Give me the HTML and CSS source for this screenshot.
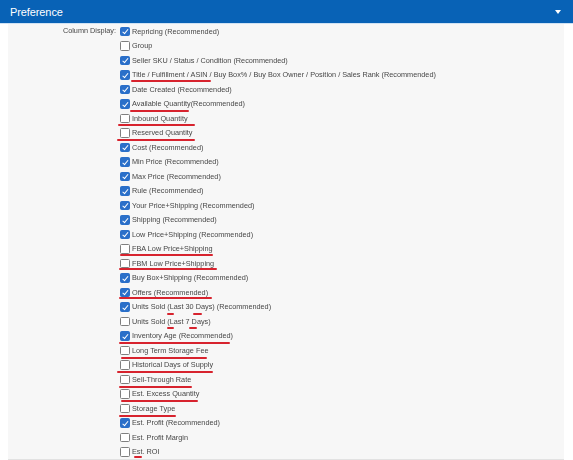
FILE: index.html
```html
<!DOCTYPE html>
<html>
<head>
<meta charset="utf-8">
<link rel="stylesheet" href="styles.css">
</head>
<body>
<div class="header">
  <span class="title">Preference</span>
  <span class="caret"></span>
</div>
<div class="panel">
  <div class="label">Column Display:</div>
  <div class="list">
    <div class="row"><span class="cb on"></span><span class="txt">Repricing (Recommended)</span></div>
    <div class="row"><span class="cb"></span><span class="txt">Group</span></div>
    <div class="row"><span class="cb on"></span><span class="txt">Seller SKU / Status / Condition (Recommended)</span></div>
    <div class="row"><span class="cb on"></span><span class="txt">Title / Fulfillment / ASIN / Buy Box% / Buy Box Owner / Position / Sales Rank (Recommended)</span><span class="mark" style="left:11px;width:80px;top:12px"></span></div>
    <div class="row"><span class="cb on"></span><span class="txt">Date Created (Recommended)</span></div>
    <div class="row"><span class="cb on"></span><span class="txt">Available Quantity(Recommended)</span><span class="mark" style="left:10px;width:59px;top:13px"></span></div>
    <div class="row"><span class="cb"></span><span class="txt">Inbound Quantity</span><span class="mark" style="left:-2px;width:77px;top:13px"></span></div>
    <div class="row"><span class="cb"></span><span class="txt">Reserved Quantity</span><span class="mark" style="left:-3px;width:78px;top:13px"></span></div>
    <div class="row"><span class="cb on"></span><span class="txt">Cost (Recommended)</span></div>
    <div class="row"><span class="cb on"></span><span class="txt">Min Price (Recommended)</span></div>
    <div class="row"><span class="cb on"></span><span class="txt">Max Price (Recommended)</span></div>
    <div class="row"><span class="cb on"></span><span class="txt">Rule (Recommended)</span></div>
    <div class="row"><span class="cb on"></span><span class="txt">Your Price+Shipping (Recommended)</span></div>
    <div class="row"><span class="cb on"></span><span class="txt">Shipping (Recommended)</span></div>
    <div class="row"><span class="cb on"></span><span class="txt">Low Price+Shipping (Recommended)</span></div>
    <div class="row"><span class="cb"></span><span class="txt">FBA Low Price+Shipping</span><span class="mark" style="left:0px;width:93px;top:12px"></span></div>
    <div class="row"><span class="cb"></span><span class="txt">FBM Low Price+Shipping</span><span class="mark" style="left:-1px;width:98px;top:12px"></span></div>
    <div class="row"><span class="cb on"></span><span class="txt">Buy Box+Shipping (Recommended)</span></div>
    <div class="row"><span class="cb on"></span><span class="txt">Offers (Recommended)</span><span class="mark" style="left:-1px;width:93px;top:12px"></span></div>
    <div class="row"><span class="cb on"></span><span class="txt">Units Sold (Last 30 Days) (Recommended)</span><span class="mark" style="left:47px;width:7px;top:13px"></span><span class="mark" style="left:73px;width:9px;top:13px"></span></div>
    <div class="row"><span class="cb"></span><span class="txt">Units Sold (Last 7 Days)</span><span class="mark" style="left:47px;width:7px;top:13px"></span><span class="mark" style="left:69px;width:8px;top:13px"></span></div>
    <div class="row"><span class="cb on"></span><span class="txt">Inventory Age (Recommended)</span><span class="mark" style="left:-1px;width:111px;top:13px"></span></div>
    <div class="row"><span class="cb"></span><span class="txt">Long Term Storage Fee</span><span class="mark" style="left:1px;width:86px;top:14px"></span></div>
    <div class="row"><span class="cb"></span><span class="txt">Historical Days of Supply</span><span class="mark" style="left:-3px;width:96px;top:13px"></span></div>
    <div class="row"><span class="cb"></span><span class="txt">Sell-Through Rate</span><span class="mark" style="left:-1px;width:73px;top:14px"></span></div>
    <div class="row"><span class="cb"></span><span class="txt">Est. Excess Quantity</span><span class="mark" style="left:1px;width:77px;top:13px"></span></div>
    <div class="row"><span class="cb"></span><span class="txt">Storage Type</span><span class="mark" style="left:-1px;width:57px;top:14px"></span></div>
    <div class="row"><span class="cb on"></span><span class="txt">Est. Profit (Recommended)</span></div>
    <div class="row"><span class="cb"></span><span class="txt">Est. Profit Margin</span></div>
    <div class="row"><span class="cb"></span><span class="txt">Est. ROI</span><span class="mark" style="left:14px;width:8px;top:11px"></span></div>
  </div>
</div>
</body>
</html>
```

FILE: styles.css
```css
html, body {
  margin: 0;
  padding: 0;
  background: #ffffff;
  font-family: "Liberation Sans", Arial, sans-serif;
  overflow: hidden;
}

.header {
  height: 23px;
  background: #0862b6;
  border-bottom: 1px solid #cfe2f4;
  display: flex;
  align-items: center;
  justify-content: space-between;
  padding: 0 12px 0 10px;
}

.title {
  color: #ffffff;
  font-size: 11px;
  letter-spacing: -0.1px;
}

.caret {
  width: 0;
  height: 0;
  border-left: 3.5px solid transparent;
  border-right: 3.5px solid transparent;
  border-top: 4px solid #ffffff;
}

.panel {
  margin: 0 9px 0 8px;
  background: #f7f7f7;
  border-bottom: 1px solid #e2e2e2;
  display: flex;
  align-items: flex-start;
}

.label {
  width: 108px;
  text-align: right;
  font-size: 7.3px;
  color: #474747;
  line-height: 14.5px;
  flex: none;
  will-change: transform;
}

.list {
  padding-left: 4px;
  display: flex;
  flex-direction: column;
  will-change: transform;
}

.row {
  position: relative;
  height: 14.5px;
  display: flex;
  align-items: center;
}

.cb {
  width: 7.5px;
  height: 7.5px;
  border: 0.8px solid #7f7f7f;
  border-radius: 1.5px;
  background: #ffffff;
  margin-right: 2.5px;
  flex: none;
  box-sizing: content-box;
  position: relative;
}

.cb.on {
  background: #2a6fc9;
  border-color: #2a6fc9;
}

.cb.on::after {
  content: "";
  position: absolute;
  left: 2.6px;
  top: 0.5px;
  width: 2.2px;
  height: 4.6px;
  border-right: 1.4px solid #ffffff;
  border-bottom: 1.4px solid #ffffff;
  transform: rotate(40deg);
}

.txt {
  font-size: 7.3px;
  color: #474747;
  white-space: nowrap;
}

.mark {
  position: absolute;
  height: 2px;
  background: #d7232e;
  border-radius: 1px;
}
```
